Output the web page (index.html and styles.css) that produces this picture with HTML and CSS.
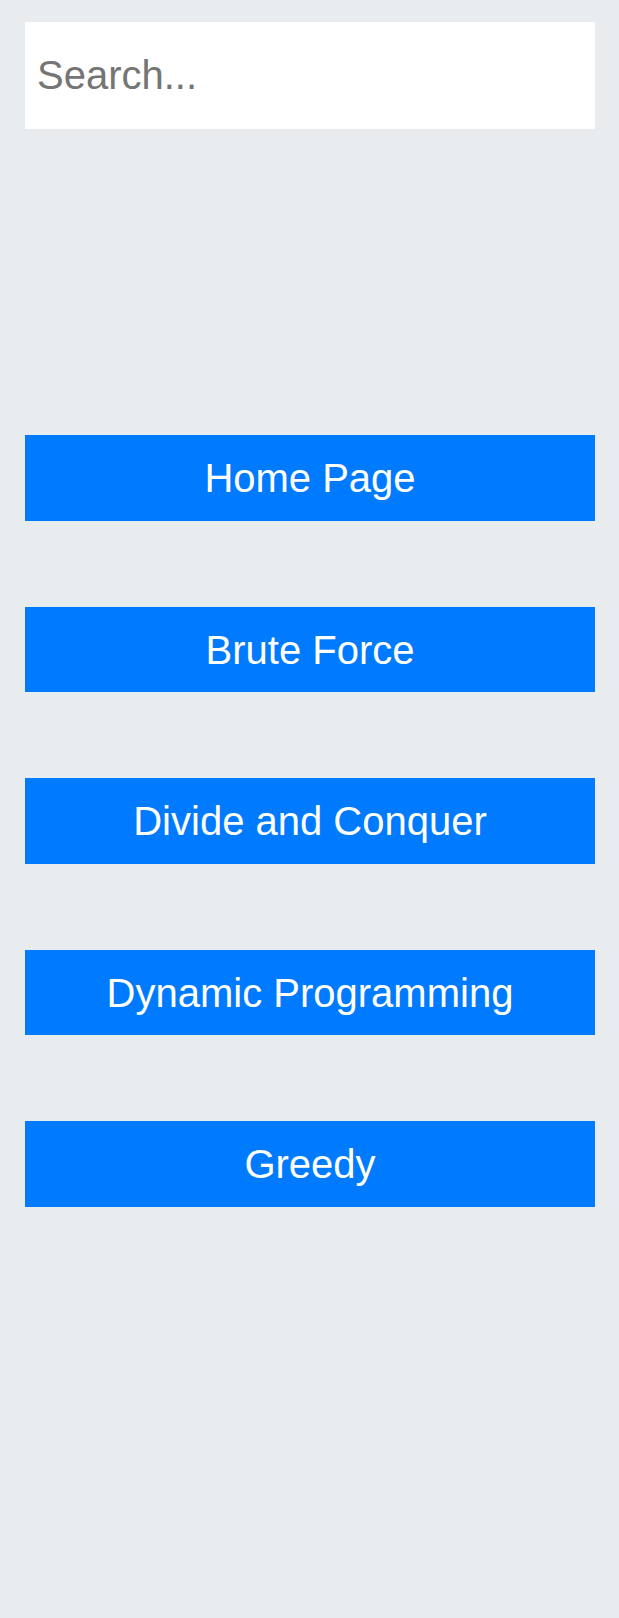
FILE: index.html
```html
<!DOCTYPE html>
<html lang="en">
<head>
<meta charset="utf-8">
<title>Algorithms</title>
<link rel="stylesheet" href="styles.css">
</head>
<body>
<div class="page">
  <input class="search" type="text" placeholder="Search...">
  <nav class="menu">
    <a class="menu-item" href="#">Home Page</a>
    <a class="menu-item" href="#">Brute Force</a>
    <a class="menu-item" href="#">Divide and Conquer</a>
    <a class="menu-item" href="#">Dynamic Programming</a>
    <a class="menu-item" href="#">Greedy</a>
  </nav>
</div>
</body>
</html>
```

FILE: styles.css
```css
html, body {
  margin: 0;
  padding: 0;
  background: #e9ecef;
  font-family: "Liberation Sans", Arial, sans-serif;
}

.page {
  padding: 22px 24px 0 25px;
  min-height: 1618px;
  box-sizing: border-box;
  display: flex;
  flex-direction: column;
}

.search {
  display: block;
  width: 100%;
  height: 107px;
  box-sizing: border-box;
  border: none;
  outline: none;
  background: #ffffff;
  padding: 0 12px;
  margin: 0;
  font-family: "Liberation Sans", Arial, sans-serif;
  font-size: 40px;
  color: #333;
}

.search::placeholder {
  color: #757575;
}

.menu {
  margin-top: 306px;
  display: flex;
  flex-direction: column;
  gap: 85.75px;
}

.menu-item {
  display: flex;
  align-items: center;
  justify-content: center;
  height: 85.75px;
  box-sizing: border-box;
  padding-top: 2px;
  background: #007bff;
  color: #ffffff;
  text-decoration: none;
  font-size: 40px;
}
```
